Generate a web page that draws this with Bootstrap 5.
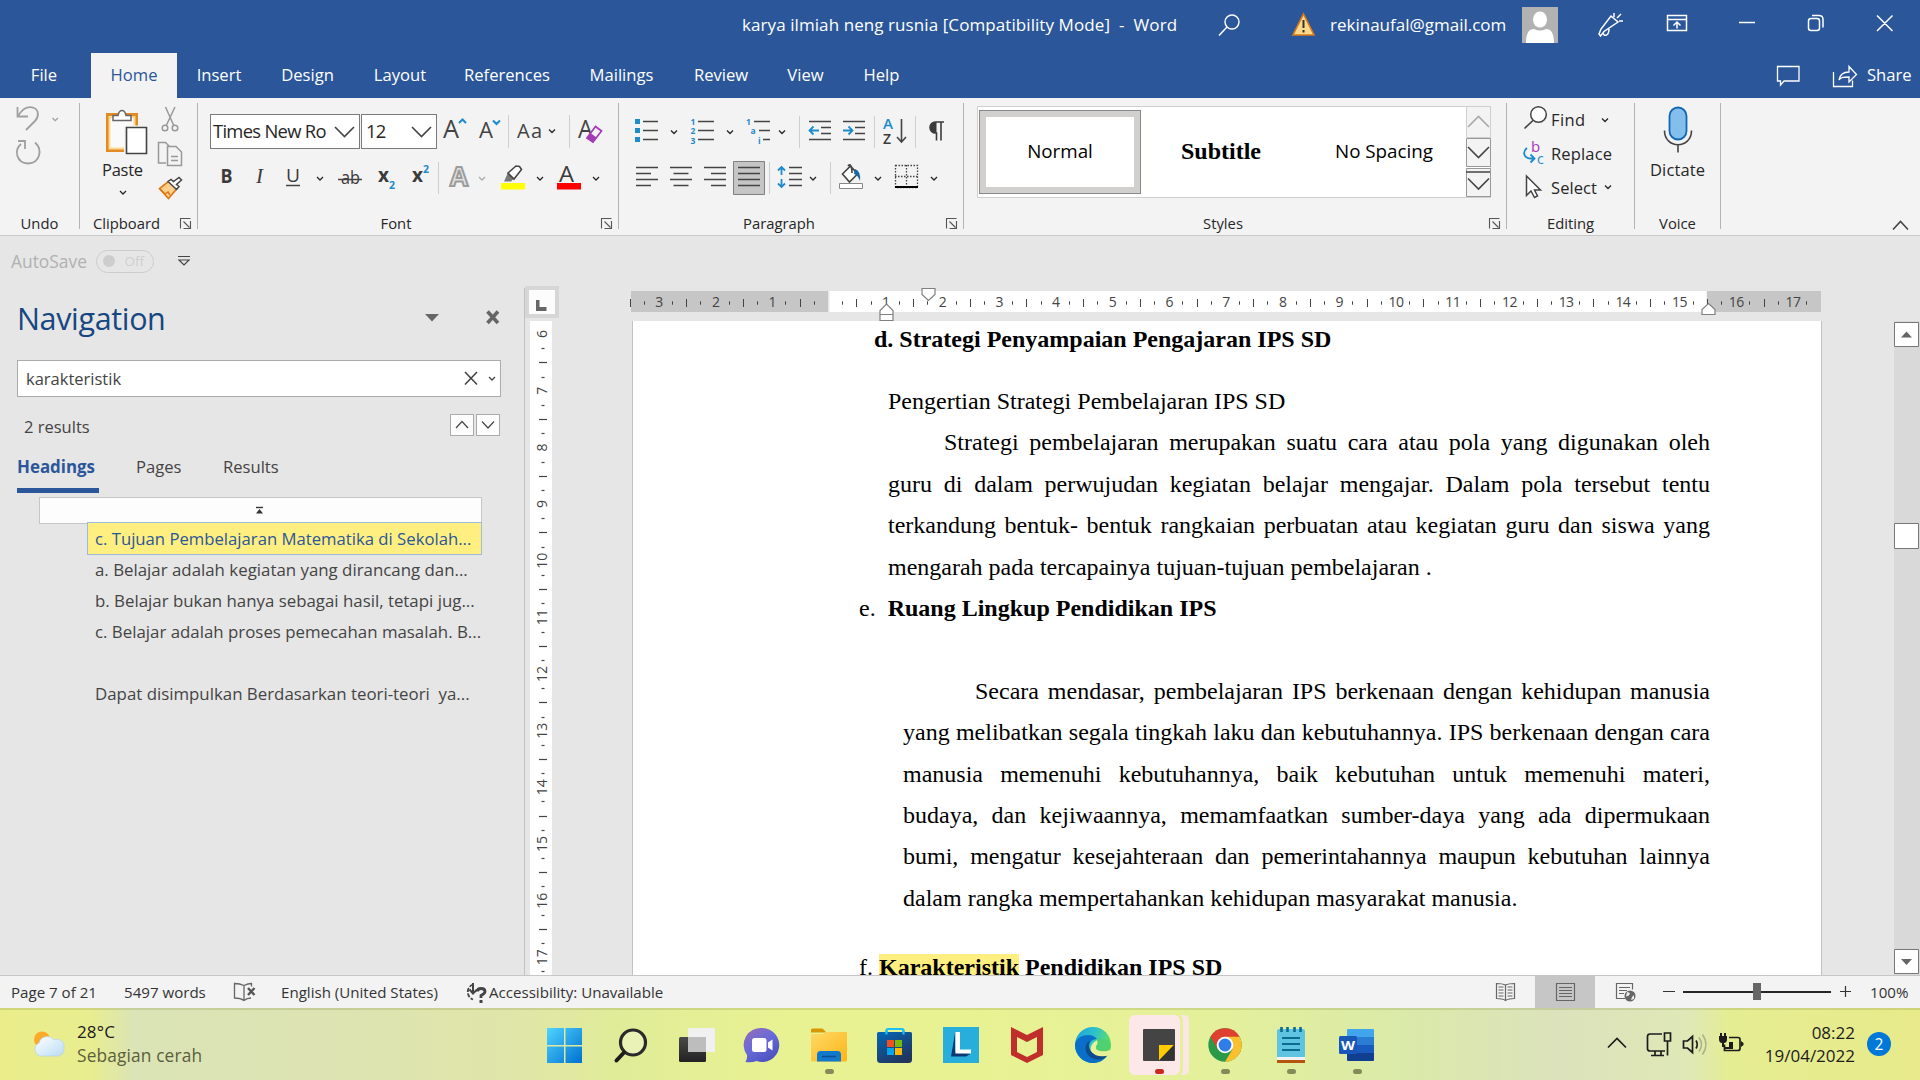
<!DOCTYPE html>
<html lang="en">
<head>
<meta charset="utf-8">
<title>karya ilmiah neng rusnia - Word</title>
<link href="https://cdn.jsdelivr.net/npm/bootstrap@5.3.0/dist/css/bootstrap.min.css" rel="stylesheet">
<style>
:root{--word:#2b579a;--pane:#e6e6e6;--ribbon:#f3f3f3;--ink:#262626;--blue:#1e8bcd}
body{width:1920px;height:1080px;overflow:hidden;background:var(--pane);font-family:"Open Sans","Noto Sans",sans-serif;font-size:16.5px;line-height:1.2;color:var(--ink)}
svg{display:block;flex:none;overflow:visible}
svg text{font-family:"Open Sans","Noto Sans",sans-serif}
.ln{fill:none;stroke:#444;stroke-width:1.6}
.titlebar{height:52px;background:var(--word);color:#fff;font-size:17px}
.t-title{width:1218px;padding-left:742px;padding-bottom:2px;white-space:pre;letter-spacing:.08px}
.t-mail{width:192px;padding-bottom:2px}
.tabrow{height:46px;background:var(--word);color:#fff;font-size:16.6px}
.tabgrid{display:grid;grid-template-columns:91px 86px 84px 93px 92px 122px 107px 92px 77px 75px;height:46px}
.tabgrid a{color:#fff;text-decoration:none;display:flex;align-items:center;justify-content:center}
.tabgrid a:first-child{padding-right:3px}
.tabgrid a.on{background:var(--ribbon);color:var(--word);margin-top:1px;padding-bottom:1px}
.share{width:53px}
.ribbon{height:138px;background:var(--ribbon);border-bottom:1px solid #c8c8c8}
.rgroup{height:126px;margin-top:5px;border-right:1px solid #b3b3b3;display:flex;flex-direction:column;flex:none}
.rbody{height:106px}
.rcap{height:20px;line-height:29px;font-size:14.8px;display:flex}
.rcap span{flex:1;text-align:center}
.g-undo{width:80px}.g-clip{width:118px}.g-font{width:421px}.g-para{width:345px}.g-style{width:543px}.g-edit{width:128px}.g-voice{width:86px}
.combo{height:35px;border:1px solid #7a7a7a;background:#fff;font-size:18.4px;margin-top:11px}
.combo span{white-space:nowrap}
.combo.fam{width:150px;margin-left:12px;padding-left:2px;letter-spacing:-.7px}
.combo.siz{width:76px;margin-left:1px;padding-left:4px;letter-spacing:-.7px}
.gallery{height:92px;width:514px;margin:3px 0 0 13px;border:1px solid #cfcfcf;background:#fff;color:#000;font-size:18.8px}
.gsel{width:162px;height:84px;margin:-1px 0 0 1px;border:1px solid #8a8886;background:#fff;box-shadow:inset 0 0 0 6px #d2d0ce;padding-bottom:1px}
.gitem{width:162px;margin-top:-2px}
.gser{font:bold 24px "Liberation Serif",serif;padding-right:2px}
.qat{height:50px;color:#b1b1b1;font-size:17.4px;padding-left:11px;margin-bottom:2px}
.autolab{width:85px}
.switchy{width:58px;height:23px;border:1px solid #cdcdcd;border-radius:12px;font-size:13.5px;color:#cfcfcf;padding:0 9px 0 6px}
.knob{width:12px;height:12px;border-radius:50%;background:#cdcdcd}
.work{height:687px}
.navpane{width:525px;height:687px;border-right:1px solid #c2c2c2;color:#444}
.navtitle{height:48px;margin-top:6px;padding-left:17px;font-size:30.5px;font-weight:400;color:#174782;width:424px;letter-spacing:-.35px}
.navsearch{width:484px;height:37px;margin:18px 0 0 17px;border:1px solid #ababab;background:#fff;padding-left:8px}
.navres{margin:17px 0 0 24px;height:22px;width:476px}
.resbtn{width:24px;height:22px;border:1px solid #ababab;background:#fdfdfd;margin-left:2px}
.navtabs{margin:15px 0 0 17px;height:42px;font-size:16.6px}
.navtabs div{height:42px;padding-top:6px}
.navtabs .on{width:82px;color:var(--word);font-weight:700;border-bottom:5px solid var(--word);font-size:16.9px;white-space:nowrap}
.navtabs .tp{margin-left:37px;width:87px}
.jump{width:443px;height:27px;margin:4px 0 0 39px;border:1px solid #c6c6c6;background:#fdfdfd}
.heads{margin-left:87px;width:395px;font-size:16.85px}
.heads div{height:31px;line-height:30px;padding-left:8px;white-space:pre}
.heads .cur{height:33px;line-height:31px;border:1px solid #9dbbdd;background:#ffee80;color:var(--word);margin-top:-2px;padding-left:7px;font-size:16.7px}
.vcol{width:107px;height:687px}
.doccol{width:1262px;height:687px}
.page{width:1190px;height:654px;background:#fff;border-left:1px solid #c2c2c2;border-right:1px solid #c2c2c2;overflow:hidden;font:24px/41.4px "Liberation Serif",serif;color:#000;padding-right:111px}
.page div{white-space:nowrap}
.jl{text-align:justify;text-align-last:justify;white-space:normal!important}
.la{margin-left:241px;margin-top:-2.3px;margin-bottom:20.9px;font-weight:700}
.pa{margin-left:255px}.pb{margin-left:270px}
.in1{padding-left:56px}.in2{padding-left:72px}
.le{margin-left:226px}
.le b{margin-left:12px}
.lf{margin-left:226px;margin-top:27.4px}
.hit{background:#ffee80}
.scroller{width:26px;height:654px;margin-top:33px;background:#d9d9d9}
.statusbar{height:33px;background:var(--ribbon);border-top:1px solid #c6c6c6;font-size:15.1px;color:#333}
.s1{width:124px;padding-left:11px}.s2{width:110px}.s3{width:184px}.s4{width:1007px}
.taskbar{height:72px;background:linear-gradient(90deg,#eaed8a 0,#e8ed8f 90px,#dbe4b6 135px,#dde3b2 330px,#e0e6a8 520px,#e0ec98 620px,#e9f292 790px,#e9f292 960px,#e4f09b 1220px,#daeaa8 1400px,#dce2bc 1560px,#dfe8b6 1690px,#e5ed92 1730px,#e8ea8a 1920px);color:#1c1c1c;box-shadow:inset 0 2px 0 rgba(120,130,60,.22)}
.weather{width:532px;padding-left:33px}
.wtext{padding-left:12px;font-size:17px;line-height:24px;letter-spacing:.15px}
.wtext small{font-size:17.3px;color:#5b5e3c;display:block}
.clock{width:112px;text-align:right;font-size:17px;line-height:23.5px}
</style>
<script src="https://cdn.jsdelivr.net/npm/bootstrap@5.3.0/dist/js/bootstrap.bundle.min.js"></script>
</head>
<body>
<svg width="0" height="0" class="position-absolute">
 <defs>
  <symbol id="chev" viewBox="-4 -3 8 6" overflow="visible"><path d="M-3-1.5 0 1.5 3-1.5" fill="none" stroke="currentColor" stroke-width="1.3"/></symbol>
  <symbol id="launch" viewBox="0 0 24 20"><path d="M7.500 19.500V9.500H17.500M10.500 12.500l6 6M17.500 12v7.500H10.500" fill="none" stroke="#555" stroke-width="1.100"/></symbol>
  <linearGradient id="gw" x1="0" y1="0" x2="1" y2="1"><stop offset="0" stop-color="#4fd4ff"/><stop offset="1" stop-color="#0070d0"/></linearGradient>
  <linearGradient id="gf" x1="0" y1="0" x2="1" y2="1"><stop offset="0" stop-color="#ffd968"/><stop offset="1" stop-color="#fbb617"/></linearGradient>
  <linearGradient id="gs" x1="0" y1="0" x2=".6" y2="1"><stop offset="0" stop-color="#0568b8"/><stop offset="1" stop-color="#20365f"/></linearGradient>
  <linearGradient id="gc" x1="0" y1="0" x2=".7" y2="1"><stop offset="0" stop-color="#9a6cb5"/><stop offset=".5" stop-color="#6a6bd8"/><stop offset="1" stop-color="#4b50c0"/></linearGradient>
  <linearGradient id="ge" x1="0" y1="0" x2="1" y2=".4"><stop offset="0" stop-color="#1b9fdc"/><stop offset=".5" stop-color="#2cc0cf"/><stop offset="1" stop-color="#62e05a"/></linearGradient>
  <linearGradient id="gt" x1="0" y1="0" x2="0" y2="1"><stop offset="0" stop-color="#4a4a4a"/><stop offset="1" stop-color="#222222"/></linearGradient>
  <linearGradient id="gcl" x1="0" y1="0" x2="1" y2="1"><stop offset="0" stop-color="#fff"/><stop offset="1" stop-color="#b9dcf5"/></linearGradient>
 </defs>
</svg>

<header class="titlebar d-flex align-items-center">
 <div class="t-title">karya ilmiah neng rusnia [Compatibility Mode]  -  Word</div>
 <svg width="112" height="52" viewBox="1218 0 112 52">
  <circle cx="1232" cy="22" r="7" fill="none" stroke="#fff" stroke-width="1.400"/><path d="M1227 27l-8 8.500" stroke="#fff" stroke-width="1.500"/>
  <path d="M1303.500 14l10.500 21h-21z" fill="#ffd98a" stroke="#d9791a" stroke-width="1.600"/><path d="M1303.500 20v8M1303.500 30v2.600" stroke="#333" stroke-width="2"/>
 </svg>
 <div class="t-mail">rekinaufal@gmail.com</div>
 <svg width="398" height="52" viewBox="1522 0 398 52">
  <path d="M1522 7h36v36h-36z" fill="#b2b2b2"/><ellipse cx="1540" cy="19.500" rx="7" ry="8" fill="#fff"/><path d="M1526 43c0-10 3-14 8-14q6 3 12 0c5 0 8 4 8 14z" fill="#fff"/>
  <g fill="none" stroke="#fff" stroke-width="1.500"><path d="M1599 34l2-5 10-13 7 6-14 9.500-3.500 4.500zM1603 33c1 4 6 3 6-4M1614 17v-4M1617 18l4-4M1619 21h4"/>
  <path d="M1667.500 15.500h19v15h-19zM1667.500 19.500h19M1677 28.500v-6M1673.500 25.500l3.500-3.500 3.500 3.500"/>
  <path d="M1739 22.500h16M1811 18.500h6q2.500 0 2.500 2.500v7q0 2.500-2.500 2.500h-6q-2.500 0-2.500-2.500v-7q0-2.500 2.500-2.500zM1812 15.500h7q4 0 4 4v8M1877 15.500l15.500 15.500M1892.500 15.500l-15.500 15.500"/></g>
 </svg>
</header>
<div class="tabrow d-flex">
 <nav class="tabgrid"><a>File</a><a class="on">Home</a><a>Insert</a><a>Design</a><a>Layout</a><a>References</a><a>Mailings</a><a>Review</a><a>View</a><a>Help</a></nav>
 <svg class="ms-auto" width="97" height="46" viewBox="1770 52 97 46"><g fill="none" stroke="#fff" stroke-width="1.300"><path d="M1777.500 66.500h21.500v14.500h-15l-3.500 4v-4h-3z"/><path d="M1833.500 72v14.500h19v-6M1839 80c1-6 5-8 10-8v-5.500l7.500 8-7.500 7.500v-5c-5 0-8 0-10 3z"/></g></svg>
 <div class="share d-flex align-items-center">Share</div>
</div>

<div class="ribbon d-flex">
 <section class="rgroup g-undo">
  <svg class="rbody" width="79" height="106" viewBox="0 103 79 106"><g fill="none" stroke="#a0a0a0" stroke-width="1.800"><path d="M17.500 107v9.500h10.500M18 116c5-8 11-10 16-8s5 9 1 13l-9 9M18 141h7v8M21 144c-7 6-5 19 7 19.500 12-.5 15-14 7-21"/><path d="M52.500 118l2.700 2.700L58 118" stroke-width="1.300"/></g></svg>
  <div class="rcap"><span>Undo</span></div>
 </section>
 <section class="rgroup g-clip">
  <div class="rbody d-flex">
   <svg width="75" height="106" viewBox="80 103 75 106"><path d="M107.500 114.500h29v36h-29z" fill="#fafafa" stroke="#e38a25" stroke-width="3"/><path d="M109.500 117h25v31.500h-25z" fill="none" stroke="#fcd993" stroke-width="2"/><path d="M113 120.500v-5h5q1-5 4-5t4 5h5v5z" fill="#fff" stroke="#666" stroke-width="1.500"/><path d="M126 127.500h20.500v26H126z" fill="#fff" stroke="#f3f3f3" stroke-width="4"/><path d="M126.500 127.500h20v26h-20z" fill="#fff" stroke="#444" stroke-width="1.600"/>
    <text x="102" y="175.500" font-size="16.500" fill="#262626" textLength="41">Paste</text><use href="#chev" x="119" y="189.500" width="8" height="6"/></svg>
   <svg width="42" height="106" viewBox="155 103 42 106"><g fill="none" stroke="#999" stroke-width="1.500"><path d="M165.500 107l8.500 19M175 107l-9 19"/><circle cx="165" cy="128" r="2.800"/><circle cx="175" cy="128" r="2.800"/><path d="M166 163h-7.500v-20.500h7l4 4M167.500 146.500h8.500l5.500 5.500v13.500h-14zM171 156.500h7M171 160.500h7"/></g>
    <path d="M169 181l8 7.500-8.500 10-9-10z" fill="#fbd08c" stroke="#dd7611" stroke-width="1.600"/><path d="M160 189l5 5 3-2 2 3" fill="none" stroke="#dd7611" stroke-width="1.400"/><path d="M168 181.500l8.500 8 2.500-3-2.500-2 5-4.500-2.500-2.500-5.500 4-2.500-2z" fill="#fff" stroke="#444" stroke-width="1.500"/></svg>
  </div>
  <div class="rcap"><span>Clipboard</span><svg width="24" height="20"><use href="#launch"/></svg></div>
 </section>
 <section class="rgroup g-font">
  <div class="rbody">
   <div class="d-flex">
    <div class="combo fam d-flex align-items-center"><span>Times New Ro</span><svg class="ms-auto me-1" width="21" height="12"><path d="M1 1l9.500 9.500L20 1" class="ln" /></svg></div>
    <div class="combo siz d-flex align-items-center"><span>12</span><svg class="ms-auto me-1" width="21" height="12"><path d="M1 1l9.500 9.500L20 1" class="ln"/></svg></div>
    <svg width="180" height="52" viewBox="438 103 180 52"><g fill="#444"><text x="444" y="138" font-size="26" textLength="16" lengthAdjust="spacingAndGlyphs">A</text><text x="480" y="138" font-size="21.500" textLength="14" lengthAdjust="spacingAndGlyphs">A</text><text x="518" y="138" font-size="20" textLength="25">Aa</text><text x="579" y="138" font-size="25" textLength="15" lengthAdjust="spacingAndGlyphs">A</text></g>
     <path d="M460 123l3.500-3.500 3.500 3.500M494 120.500l3.500 3.500 3.500-3.500" fill="none" stroke="var(--blue)" stroke-width="2"/><path d="M509.500 115v33M570.500 115v33" stroke="#cfcfcf"/><use href="#chev" x="549" y="128" width="8" height="6"/><path d="M588 138l8.500-11.500 6 4.500-8.500 11z" fill="#f3f3f3" stroke="#a33bb5" stroke-width="1.700"/><path d="M588 138l3.500-5 6 4.500-3.500 4.500z" fill="#a33bb5"/></svg>
   </div>
   <svg width="420" height="50" viewBox="198 155 420 50"><g fill="#3b3b3b"><text x="220.500" y="182.500" font-size="19.500" font-weight="700" textLength="12" lengthAdjust="spacingAndGlyphs">B</text><text x="256" y="182.500" font-size="21" font-style="italic" style="font-family:'Liberation Serif'">I</text><text x="286" y="181.500" font-size="19" textLength="14" lengthAdjust="spacingAndGlyphs">U</text><text x="341" y="184" font-size="18" textLength="19" lengthAdjust="spacingAndGlyphs">ab</text><text x="378" y="182" font-size="19" font-weight="700" textLength="11">x</text><text x="412" y="182" font-size="19" font-weight="700" textLength="11">x</text><text x="559" y="181.500" font-size="22.500" textLength="15" lengthAdjust="spacingAndGlyphs">A</text></g>
    <g fill="var(--blue)" font-weight="700" font-size="10.500"><text x="389" y="188.500">2</text><text x="423" y="173">2</text></g>
    <path d="M286 185.500h14M338 179.500h24" stroke="#444" stroke-width="1.600"/><path d="M438.500 162v32" stroke="#cfcfcf"/>
    <text x="450" y="185.500" font-size="26" font-weight="700" fill="#e3e3e3" stroke="#9c9c9c" stroke-width="2" textLength="18" lengthAdjust="spacingAndGlyphs">A</text>
    <path d="M501 183h24v6.500h-24z" fill="#ff0"/><path d="M557 183h24v6.500h-24z" fill="red"/><path d="M504 181.500l4-9 6 6-3 3z" fill="#777"/><path d="M508 173l8-7 3.500.5 2 3-7.500 9.500z" fill="#fff" stroke="#444" stroke-width="1.600"/>
    <use href="#chev" x="316" y="175.500" width="8" height="6"/><use href="#chev" x="478" y="175.500" width="8" height="6" color="#aaa"/><use href="#chev" x="536" y="175.500" width="8" height="6"/><use href="#chev" x="592" y="175.500" width="8" height="6"/></svg>
  </div>
  <div class="rcap"><span>Font</span><svg width="24" height="20"><use href="#launch"/></svg></div>
 </section>
 <section class="rgroup g-para">
  <div class="rbody">
   <svg width="344" height="52" viewBox="619 103 344 52"><path d="M635 119h5v5h-5zM635 128h5v5h-5zM635 137h5v5h-5z" fill="var(--blue)"/>
    <path d="M643 121.500h15M643 130.500h15M643 139.500h15M698 121.500h16M698 130.500h16M698 139.500h16M754 121.500h16M759 130.500h11M763 139.500h7M809 121.500h22M821 127.500h10M821 133.500h10M809 139.500h22M843 121.500h22M855 127.500h10M855 133.500h10M843 139.500h22M901.500 119v22M897 137l4.500 5 4.500-5" class="ln"/>
    <g fill="var(--blue)" font-size="8.500" font-weight="700"><text x="690.500" y="124.500">1</text><text x="690.500" y="134">2</text><text x="690.500" y="143.500">3</text><text x="746" y="124.500">1</text><text x="750.500" y="134">a</text><text x="758" y="143.500">i</text><text x="883" y="129" font-size="14" font-weight="600" textLength="10" lengthAdjust="spacingAndGlyphs">A</text></g><text x="883" y="143.500" font-size="14" font-weight="600" fill="#3b3b3b">Z</text>
    <path d="M819 130.500h-9M813.500 126.500l-4 4 4 4M843 130.500h9M848.500 126.500l4 4-4 4" fill="none" stroke="var(--blue)" stroke-width="1.800"/>
    <path d="M799.500 116v32M874.500 116v32M915.500 116v32" stroke="#cfcfcf"/><path d="M944 122h-8.500a5.500 5.500 0 0 0 0 11h1v7.500M941 122v18.500" fill="none" stroke="#3b3b3b" stroke-width="1.600"/><path d="M936.500 122h-1a5.500 5.500 0 0 0 0 11h1z" fill="#3b3b3b"/>
    <use href="#chev" x="670" y="129" width="8" height="6"/><use href="#chev" x="726" y="129" width="8" height="6"/><use href="#chev" x="778" y="129" width="8" height="6"/></svg>
   <svg width="344" height="50" viewBox="619 155 344 50"><path d="M733.500 161.500h31v33h-31z" fill="#c5c5c5" stroke="#808080"/>
    <path d="M636 167.500h22M636 173.500h15M636 179.500h22M636 185.500h15M670 167.500h22M673.500 173.500h15M670 179.500h22M673.500 185.500h15M704 167.500h22M711 173.500h15M704 179.500h22M711 185.500h15M738 167.500h22M738 173.500h22M738 179.500h22M738 185.500h22M789 167.500h13M789 173.500h13M789 179.500h13M789 185.500h13" class="ln"/>
    <path d="M781.500 175v-7M778 170.500l3.500-3.500 3.500 3.500M781.500 179v7M778 183.500l3.500 3.500 3.500-3.500" fill="none" stroke="var(--blue)" stroke-width="1.800"/><path d="M769.500 162v32M830.500 162v32" stroke="#cfcfcf"/>
    <path d="M842.500 174l8-8 7 8-8 8zM848 166c2-3 4 0 4 7" fill="#fff" stroke="#444" stroke-width="1.600"/><path d="M855 169q6 2 5 12-2-6-6-7z" fill="#1565a9"/><path d="M839.500 183.500h23v5h-23z" fill="#fff" stroke="#888"/>
    <path d="M895.500 165.500h22v22h-22zM906.500 165v22M895 176.500h23" fill="none" stroke="#444" stroke-width="1.300" stroke-dasharray="1.500 1.500"/><path d="M895 187h23" stroke="#000" stroke-width="2"/>
    <use href="#chev" x="809" y="175.500" width="8" height="6"/><use href="#chev" x="874" y="175.500" width="8" height="6"/><use href="#chev" x="930" y="175.500" width="8" height="6"/></svg>
  </div>
  <div class="rcap"><span>Paragraph</span><svg width="24" height="20"><use href="#launch"/></svg></div>
 </section>
 <section class="rgroup g-style">
  <div class="rbody">
   <div class="gallery d-flex align-items-center">
    <div class="gsel d-flex align-items-center justify-content-center">Normal</div><div class="gitem text-center gser">Subtitle</div><div class="gitem text-center">No Spacing</div>
    <svg class="ms-auto" width="24" height="90" viewBox="1466 107 24 90"><path d="M1466.500 106.500h24v31h-24z" fill="#f3f3f3" stroke="#cfcfcf"/><path d="M1466.500 138.500h24v28h-24zM1466.500 168.500h24v28h-24z" fill="#f3f3f3" stroke="#999"/><path d="M1468 127l10.500-10.500L1489 127" class="ln" style="stroke:#aaa"/><path d="M1468 147l10.500 10.500L1489 147M1466 172h24M1468 178.500l10.500 10.500L1489 178.500" class="ln"/></svg>
   </div>
  </div>
  <div class="rcap"><span>Styles</span><svg width="24" height="20"><use href="#launch"/></svg></div>
 </section>
 <section class="rgroup g-edit">
  <svg class="rbody" width="127" height="106" viewBox="1507 103 127 106"><circle cx="1538.500" cy="114.500" r="7.800" fill="#fff" stroke="#444" stroke-width="1.500"/><path d="M1533 120.500l-8.500 8" stroke="#444" stroke-width="1.700"/>
   <g font-size="16.500" fill="#262626"><text x="1551" y="125.500" textLength="34">Find</text><text x="1551" y="159.500" textLength="61">Replace</text><text x="1551" y="193.500" textLength="46">Select</text></g>
   <text x="1531" y="152" font-size="15" fill="#a33bb5">b</text><text x="1537" y="163.500" font-size="14" fill="var(--blue)">c</text><path d="M1527 148c-5 4-3 10 3 10.500h4M1530.500 154.500l4 4-4 4" fill="none" stroke="var(--blue)" stroke-width="1.800"/>
   <path d="M1526.500 176v19.500l4.500-4.500 3.500 6.500 3-1.500-3-6h6z" fill="#fff" stroke="#444" stroke-width="1.500"/>
   <use href="#chev" x="1601" y="117" width="8" height="6"/><use href="#chev" x="1604" y="184" width="8" height="6"/></svg>
  <div class="rcap"><span>Editing</span></div>
 </section>
 <section class="rgroup g-voice">
  <svg class="rbody" width="85" height="106" viewBox="1635 103 85 106"><rect x="1669.500" y="107.500" width="17" height="32" rx="8.500" fill="#83beec" stroke="#1267b4" stroke-width="1.800"/><path d="M1664.500 130.500c0 19 27 19 27 0M1678 144.500v8" class="ln"/><text x="1650" y="175.500" font-size="16.500" fill="#262626" textLength="55">Dictate</text></svg>
  <div class="rcap"><span>Voice</span></div>
 </section>
 <svg class="ms-auto" width="40" height="137" viewBox="1880 98 40 137"><path d="M1893 229.500l7.500-8 7.500 8" class="ln"/></svg>
</div>

<div class="qat d-flex align-items-center">
 <div class="autolab">AutoSave</div>
 <div class="switchy d-flex align-items-center justify-content-between"><div class="knob"></div>Off</div>
 <svg width="40" height="20"><path d="M24 5.500h12M25 9l5 5 5-5z" fill="none" stroke="#444" stroke-width="1.200"/></svg>
</div>

<main class="work d-flex">
 <aside class="navpane">
  <div class="d-flex">
   <div class="navtitle d-flex align-items-center">Navigation</div>
   <svg width="100" height="54" viewBox="424 288 100 54"><path d="M425 314h14l-7 7.500z" fill="#666"/><path d="M487.500 311.500l10.500 11.500M498 311.500l-10.500 11.500" stroke="#666" stroke-width="3.600"/></svg>
  </div>
  <div class="navsearch d-flex align-items-center"><span>karakteristik</span><svg class="ms-auto" width="38" height="35" viewBox="463 363 38 35"><path d="M466 374l12 12.500M478 374l-12 12.500" class="ln"/><use href="#chev" x="489" y="377.500" width="8" height="6"/></svg></div>
  <div class="navres d-flex align-items-center"><span class="me-auto pt-1">2 results</span><div class="resbtn"><svg width="22" height="20"><path d="M5 13l6-6.500 6 6.500" class="ln" style="stroke-width:1.200"/></svg></div><div class="resbtn"><svg width="22" height="20"><path d="M5 6.500l6 6.500 6-6.500" class="ln" style="stroke-width:1.200"/></svg></div></div>
  <div class="navtabs d-flex"><div class="on">Headings</div><div class="tp">Pages</div><div>Results</div></div>
  <div class="jump"><svg width="441" height="25"><path d="M216 9.500h7" stroke="#333" stroke-width="1.400"/><path d="M216 15.500h7l-3.500-4.500z" fill="#333"/></svg></div>
  <div class="heads"><div class="cur">c. Tujuan Pembelajaran Matematika di Sekolah...</div><div>a. Belajar adalah kegiatan yang dirancang dan...</div><div>b. Belajar bukan hanya sebagai hasil, tetapi jug...</div><div>c. Belajar adalah proses pemecahan masalah. B...</div><div> </div><div>Dapat disimpulkan Berdasarkan teori-teori  ya...</div></div>
 </aside>
 <svg class="vcol" id="vruler" width="107" height="687" viewBox="525 288 107 687"><path d="M525 286h34v32h-34z" fill="#d6d6d6"/><path d="M529 290h26v24h-26z" fill="#fcfcfc"/><path d="M536 300h3.500v7h7v4h-10.500z" fill="#666"/><path d="M530 321h22v654h-22z" fill="#fff"/></svg>
 <section class="doccol">
  <svg id="hruler" width="1262" height="33" viewBox="632 288 1262 33"><path d="M631 291h197v21H631zM1707 291h114v21h-114z" fill="#c6c6c6"/><path d="M829.500 291h877v21h-877z" fill="#fff"/></svg>
  <article class="page">
   <div class="la">d. Strategi Penyampaian Pengajaran IPS SD</div>
   <div class="pa">Pengertian Strategi Pembelajaran IPS SD</div>
   <div class="pa jl in1">Strategi pembelajaran merupakan suatu cara atau pola yang digunakan oleh</div>
   <div class="pa jl">guru di dalam perwujudan kegiatan belajar mengajar. Dalam pola tersebut tentu</div>
   <div class="pa jl">terkandung bentuk- bentuk rangkaian perbuatan atau kegiatan guru dan siswa yang</div>
   <div class="pa">mengarah pada tercapainya tujuan-tujuan pembelajaran .</div>
   <div class="le">e.<b>Ruang Lingkup Pendidikan IPS</b></div>
   <div>&nbsp;</div>
   <div class="pb jl in2">Secara mendasar, pembelajaran IPS berkenaan dengan kehidupan manusia</div>
   <div class="pb jl">yang melibatkan segala tingkah laku dan kebutuhannya. IPS berkenaan dengan cara</div>
   <div class="pb jl">manusia memenuhi kebutuhannya, baik kebutuhan untuk memenuhi materi,</div>
   <div class="pb jl">budaya, dan kejiwaannya, memamfaatkan sumber-daya yang ada dipermukaan</div>
   <div class="pb jl">bumi, mengatur kesejahteraan dan pemerintahannya maupun kebutuhan lainnya</div>
   <div class="pb">dalam rangka mempertahankan kehidupan masyarakat manusia.</div>
   <div class="lf">f. <b><span class="hit">Karakteristik</span> Pendidikan IPS SD</b></div>
  </article>
 </section>
 <svg class="scroller" width="26" height="654" viewBox="1894 321 26 654"><g fill="#fff" stroke="#777"><path d="M1894.500 322.500h24v24h-24zM1894.500 523.500h24v25h-24zM1894.500 949.500h24v24h-24z"/></g><path d="M1901 337.500h11l-5.500-6zM1901 959h11l-5.500 6z" fill="#666"/></svg>
</main>

<footer class="statusbar d-flex align-items-center">
 <div class="s1">Page 7 of 21</div><div class="s2">5497 words</div>
 <svg width="47" height="32" viewBox="234 976 47 32"><path d="M244 985.500q-4-2-9.500-2v14.500q6 0 9.500 2.500 3-2.500 7-2.500M244 985.500v15M244 985.500q4-2 7.500-2v3" class="ln" style="stroke:#666;stroke-width:1.300"/><path d="M248 988l6.500 7M254.500 988l-6.500 7" stroke="#555" stroke-width="2.400"/></svg>
 <div class="s3">English (United States)</div>
 <svg width="24" height="32" viewBox="465 976 24 32"><path d="M473 984.500a8 8 0 0 0 0 15" class="ln" stroke-dasharray="4 1.500" style="stroke-width:1.800"/><path d="M473 983v10M469.500 989.500l3.500 4 4-4" class="ln" style="stroke-width:2"/><path d="M477.500 991.500q0-3 3.500-3 4 0 4 3 0 2-4 4v2.500" class="ln" style="stroke-width:2.800"/><path d="M479.500 1000h3v3h-3z" fill="#444"/></svg>
 <div class="s4">Accessibility: Unavailable</div>
 <svg width="374" height="32" viewBox="1496 976 374 32"><path d="M1535 976h60v32h-60z" fill="#c6c6c6"/><g fill="none" stroke="#666" stroke-width="1.200"><path d="M1505.500 985q-3-1.500-9-1.500v15q6 0 9 2 3-2 9-2v-15q-6 0-9 1.500zv16M1498.500 987h5M1498.500 990h5M1498.500 993h5M1498.500 996h5M1507.500 987h5M1507.500 990h5M1507.500 993h5M1507.500 996h5"/><path d="M1556.500 983.500h18v17h-18zM1559 987.500h13M1559 990.500h13M1559 993.500h13M1559 996.500h13"/><path d="M1625 998.500h-8.500v-15h16v6M1619 987.500h11M1619 990.500h8M1619 993.500h5"/></g><circle cx="1630" cy="996" r="5.500" fill="#666"/><path d="M1627 992l3 1-1 2.500-3 1zM1632 997l2-2v4l-3 1z" fill="#eee"/><path d="M1663 991.500h12M1840 991.500h11M1845.500 986v11" stroke="#333" stroke-width="1.200"/><path d="M1683 992h148" stroke="#262626" stroke-width="2"/><path d="M1753 983h8v17h-8z" fill="#666"/></svg>
 <div>100%</div>
</footer>

<footer class="taskbar d-flex align-items-center">
 <div class="weather d-flex align-items-center">
  <svg width="32" height="26" viewBox="33 1033 32 26"><circle cx="42" cy="1041.500" r="8" fill="#fbab2b"/><path d="M40 1058a7 7 0 0 1-1-13 8.500 8.500 0 0 1 15-3 7 7 0 0 1 10 8q0 8-7 8z" fill="url(#gcl)" stroke="#b4d3e8" stroke-width=".7"/></svg>
  <div class="wtext">28°C<small>Sebagian cerah</small></div>
 </div>
 <svg width="66" height="72" viewBox="532 1008 66 72"><path d="M547 1028h17v17h-17zM565.500 1028h16.500v17h-16.500zM547 1046.500h17v16.500h-17zM565.500 1046.500h16.500v16.500h-16.500z" fill="url(#gw)"/></svg>
 <svg width="66" height="72" viewBox="598 1008 66 72"><circle cx="633" cy="1042.500" r="12.500" fill="rgba(255,255,255,.3)" stroke="#2a2a2a" stroke-width="3.200"/><path d="M624 1052.500l-7.500 8" stroke="#1d1d1d" stroke-width="4" stroke-linecap="round"/></svg>
 <svg width="66" height="72" viewBox="664 1008 66 72"><rect x="679" y="1037" width="27" height="25" rx="1.500" fill="url(#gt)"/><rect x="688" y="1028" width="27" height="24" rx="1.500" fill="#f1f1f1"/><path d="M688 1037h18v15h-18z" fill="#bdbdbd"/></svg>
 <svg width="66" height="72" viewBox="730 1008 66 72"><path d="M762.500 1028a17 17 0 1 1-6 33q-5 2-11 1 2-3 1.500-7a17 17 0 0 1 15.500-27z" fill="url(#gc)"/><rect x="752" y="1038" width="14.500" height="14" rx="2.500" fill="#fff"/><path d="M768 1042.500l4.500-3v11l-4.500-3z" fill="#fff"/></svg>
 <svg width="66" height="72" viewBox="796 1008 66 72"><path d="M811 1030q0-1.500 1.500-1.500h10l4 4h-15.500z" fill="#d99803"/><path d="M811 1034h12l3-2h21v28q0 1.500-1.500 1.500h-33q-1.500 0-1.500-1.500z" fill="url(#gf)"/><path d="M817 1061.500v-7q0-3.500 3.500-3.500h17q3.500 0 3.500 3.500v7z" fill="#1079cc"/><path d="M822 1056.500h14" stroke="#0b4f92" stroke-width="1.600"/><rect x="825" y="1069" width="9" height="5" rx="2.500" fill="#858a5a"/></svg>
 <svg width="66" height="72" viewBox="862 1008 66 72"><path d="M886.500 1034v-3.500q0-1.500 1.500-1.500h14q1.500 0 1.500 1.500v3.500" fill="none" stroke="#1fc0f2" stroke-width="2.200"/><path d="M877 1033.500q0-1.500 1.500-1.500h32q1.500 0 1.500 1.500v26q0 3.500-3.500 3.500h-28q-3.500 0-3.500-3.500z" fill="url(#gs)"/><path d="M886.500 1030v4.500M903.500 1030v4.500" stroke="#1fc0f2" stroke-width="2.200"/><path d="M887 1040h7v7h-7z" fill="#f25022"/><path d="M895 1040h7v7h-7z" fill="#7fba00"/><path d="M887 1048h7v7h-7z" fill="#00a4ef"/><path d="M895 1048h7v7h-7z" fill="#ffb900"/></svg>
 <svg width="66" height="72" viewBox="928 1008 66 72"><path d="M943 1027h36v36h-36z" fill="#27aedb"/><path d="M955 1033l-4 23.500 15 0 5-3-16-1z" fill="#0b3a73"/><path d="M955.500 1032h4.500v17.500h11v4h-15.500z" fill="#fff"/></svg>
 <svg width="66" height="72" viewBox="994 1008 66 72"><path d="M1011 1027l16 8 16-8v28l-16 8-16-8zM1017 1037v15l10 5 10-5v-15l-10 5z" fill="#bf2e2b" fill-rule="evenodd"/></svg>
 <svg width="66" height="72" viewBox="1060 1008 66 72"><circle cx="1093" cy="1045" r="18" fill="url(#ge)"/><path d="M1075 1045c0-9 16-14 22-6q-7 0-8 7c0 8 10 11 19 8-4 7-10 9-15 9-10 0-18-8-18-18z" fill="#0a6fc8"/><path d="M1086 1045c-3 10 8 18 19 13l3-4c-9 3-19 0-19-8q-1-2 1-5-3 1-4 4z" fill="#114a8c"/><path d="M1097 1040q2 3-1 6 0 5 8 5 8 0 10-4 0 4-3 8-15 4-20-4-2-6 6-11z" fill="#e7f197"/><path d="M1109 1040q4 8-2 11-5 1-10-1-2-2 0-4 2-4-1-7z" fill="#50d070"/></svg>
 <svg width="66" height="72" viewBox="1126 1008 66 72"><path d="M1180 1015h3q6 0 6 6v48q0 6-6 6h-3q3-1 3-6v-48q0-5-3-6z" fill="#fbe6e6"/><rect x="1129" y="1015" width="51" height="60" rx="6" fill="#fce8e8"/><rect x="1143" y="1029" width="32" height="32" rx="1" fill="#444"/><path d="M1159 1045h15l-15 15.500z" fill="#fc0"/><path d="M1159 1060.500l15-15.500v15.500z" fill="#333"/><rect x="1155" y="1069" width="9" height="5" rx="2.500" fill="#c92a1e"/></svg>
 <svg width="66" height="72" viewBox="1192 1008 66 72"><circle cx="1225" cy="1045" r="16.700" fill="#2a9a4a"/><path d="M1225 1045l-14.500-8.300a16.700 16.700 0 0 1 29 0z" fill="#e0402f"/><path d="M1210.500 1036.700l7.300 12.500 7.200-12.500z" fill="#e0402f"/><path d="M1225 1036.700h14.500a16.700 16.700 0 0 1-14.500 25l7.500-12.500z" fill="#fbc02d"/><circle cx="1225" cy="1045" r="8.300" fill="#fff"/><circle cx="1225" cy="1045" r="6.400" fill="#2f7de9"/><rect x="1221" y="1069" width="9" height="5" rx="2.500" fill="#858a5a"/></svg>
 <svg width="66" height="72" viewBox="1258 1008 66 72"><path d="M1277 1055h28v8h-28z" fill="#b5540c"/><path d="M1277 1054h28v6h-28z" fill="#f2f2f2"/><path d="M1277 1031q0-2 2-2h24q2 0 2 2v26h-28z" fill="#5fc4e0"/><path d="M1282 1038h18M1282 1044h18M1282 1050h18" stroke="#0b6b93" stroke-width="2"/><path d="M1281.500 1027v5M1287.500 1027v5M1294.500 1027v5M1300.500 1027v5" stroke="#0b6b93" stroke-width="2.600"/><rect x="1287" y="1069" width="9" height="5" rx="2.500" fill="#858a5a"/></svg>
 <svg width="66" height="72" viewBox="1324 1008 66 72"><path d="M1347 1030q0-1 1-1h25q1 0 1 1v7h-27z" fill="#41a5ee"/><path d="M1347 1037h27v8h-27z" fill="#2b7cd3"/><path d="M1347 1045h27v8h-27z" fill="#185abd"/><path d="M1347 1053h27v7q0 1-1 1h-25q-1 0-1-1z" fill="#103f91"/><rect x="1339" y="1036" width="18" height="18" rx="1.500" fill="#1a56b8"/><text x="1341" y="1050" font-size="13" font-weight="700" fill="#fff" textLength="14" lengthAdjust="spacingAndGlyphs">W</text><rect x="1353" y="1069" width="9" height="5" rx="2.500" fill="#858a5a"/></svg>
 <svg class="ms-auto" width="153" height="72" viewBox="1590 1008 153 72"><g fill="none" stroke="#1c1c1c" stroke-width="1.700"><path d="M1608 1047.500l9-9 9 9"/><path d="M1662 1034h-12q-2.500 0-2.500 2.500v12q0 2.500 2.500 2.500h15M1651 1055.500h13M1655 1051v4M1661 1051v4M1664.500 1033h6v8h-6zM1667.500 1041v14.500"/><path d="M1683.500 1041v7h4l5 4.500v-16l-5 4.500zM1696 1040.500q2.500 4 0 8"/><path d="M1699 1037.500q5 7 0 14M1702.500 1034.500q7 10 0 20" stroke="#aeb48a"/><path d="M1729 1037.500h9q2 0 2 2v9q0 2-2 2h-13.500v-6"/></g><path d="M1719 1036h8v3q0 4-3 4v4h-2v-4q-3 0-3-4zM1720 1033h2v4h-2zM1724 1033h2v4h-2zM1725 1047h4v-5h4v7h-8zM1741 1041l2.500 2v2l-2.500 2z" fill="#1c1c1c"/></svg>
 <div class="clock">08:22<br>19/04/2022</div>
 <svg width="65" height="72" viewBox="1855 1008 65 72"><circle cx="1879" cy="1044" r="12" fill="#0078d7"/><text x="1879" y="1049.500" text-anchor="middle" font-size="15.500" fill="#fff">2</text></svg>
</footer>

<script>
// Ruler scale: one centimetre is 56.7px, with quarter marks between the numbers
function el(svg, name, attrs, txt){
  const e = document.createElementNS('http://www.w3.org/2000/svg', name);
  for (const k in attrs) e.setAttribute(k, attrs[k]);
  if (txt) e.textContent = txt;
  svg.appendChild(e);
}
const h = document.getElementById('hruler'), v = document.getElementById('vruler');
for (let q = -14; q <= 69; q++) {
  if (q === 0) continue;
  const x = 829 + q * 14.175;
  if (q % 4 === 0) el(h, 'text', {x, y:307, 'text-anchor':'middle', 'font-size':14, fill:'#444', 'letter-spacing':'-.6'}, String(Math.abs(q / 4)));
  else { const r = q % 2 ? 1.7 : 4; el(h, 'path', {d:`M${Math.round(x)-.5} ${303-r}v${2*r}`, stroke:'#444', 'stroke-width':1}); }
}
for (let q = 24; q <= 69; q++) {
  const y = -5.8 + q * 14.163;
  if (q % 4 === 0) el(v, 'text', {transform:`translate(547 ${y}) rotate(-90)`, 'text-anchor':'middle', 'font-size':14, fill:'#444'}, String(q / 4));
  else { const r = q % 2 ? 1.5 : 4; if (y < 974) el(v, 'path', {d:`M${543-r} ${Math.round(y)+.5}h${2*r}`, stroke:'#444', 'stroke-width':1.2}); }
}
const mk = {fill:'#fff', stroke:'#808080', 'stroke-width':1.2};
el(h, 'path', {...mk, d:'M922 288.500h13v6l-6.500 6-6.500-6z'});
el(h, 'path', {...mk, d:'M880 320.500v-10l6.500-6.500 6.500 6.500v10zM880 314.500h13'});
el(h, 'path', {...mk, d:'M1702 314.500v-5l6.500-6 6.500 6v5z'});
</script>
</body>
</html>
